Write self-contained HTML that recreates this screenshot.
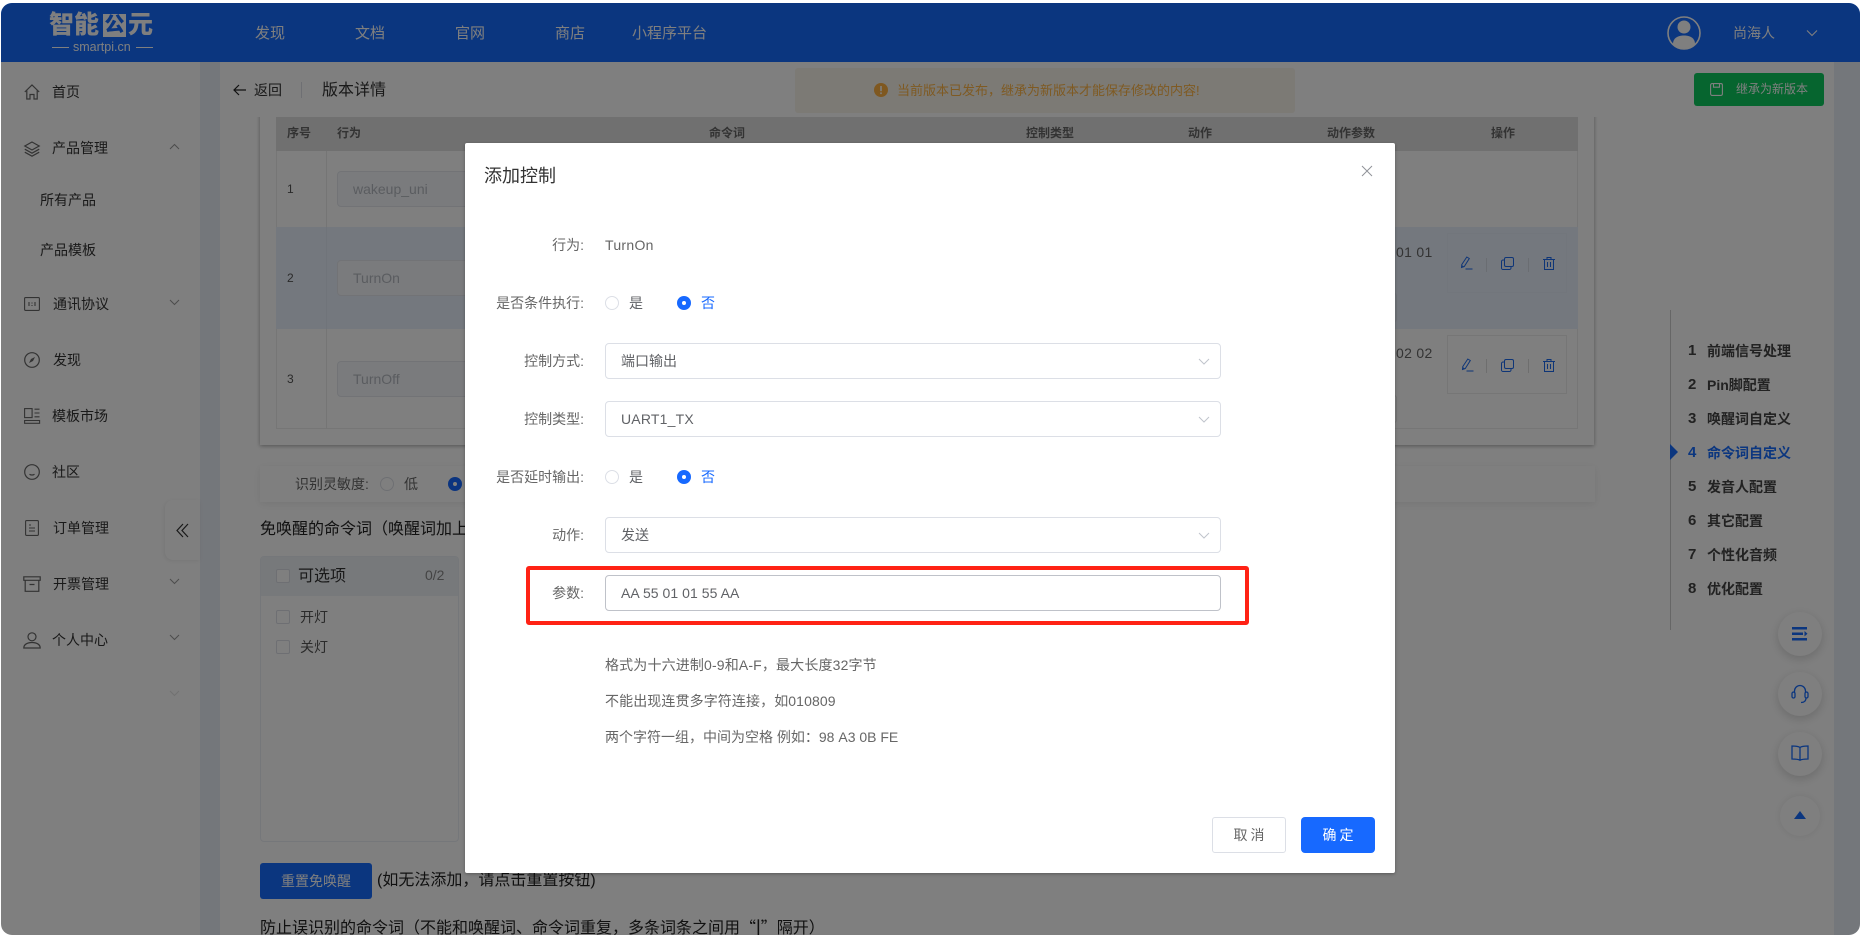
<!DOCTYPE html>
<html lang="zh-CN">
<head>
<meta charset="utf-8">
<title>版本详情</title>
<style>
*{box-sizing:border-box}
html,body{margin:0;padding:0;width:1860px;height:935px;overflow:hidden;background:#fff;font-family:"Liberation Sans","Noto Sans CJK SC",sans-serif}
#wrap{position:absolute;left:1px;top:3px;width:1859px;height:932px;border-radius:11px;overflow:hidden;background:#fff}
#page{position:absolute;left:-1px;top:-3px;width:1860px;height:935px;background:#fff}
.a{position:absolute}
.t{position:absolute;white-space:nowrap;line-height:20px;font-size:14px;color:#333}
svg{position:absolute;overflow:visible}
#ov{position:absolute;left:-1px;top:-3px;width:1860px;height:935px;background:rgba(0,0,0,.5)}
.head{font-size:12px;font-weight:700;color:#666}
.nav{font-size:15px;color:#fff}
.rnav{font-weight:700;color:#444;letter-spacing:0}
.rnav b{position:absolute;left:-19px;font-size:15px}
.rd{position:absolute;width:14px;height:14px;border-radius:50%;border:1px solid #dcdfe6;background:#fff}
.rc{position:absolute;width:14px;height:14px;border-radius:50%;background:#1769ff}
.rc:after{content:"";position:absolute;left:5px;top:5px;width:4px;height:4px;border-radius:50%;background:#fff}
.cb{position:absolute;width:14px;height:14px;border:1px solid #dcdfe6;border-radius:2px;background:#fff}
.inp{position:absolute;left:605px;width:616px;height:36px;border:1px solid #dcdfe6;border-radius:4px;background:#fff}
.lb{position:absolute;right:1276px;white-space:nowrap;line-height:20px;font-size:14px;color:#666}
.val{position:absolute;white-space:nowrap;line-height:20px;font-size:14px;color:#606266}
.circle{position:absolute;left:1778px;width:44px;height:44px;border-radius:50%;background:#fff;box-shadow:0 3px 10px rgba(0,0,0,.16)}
.lg{position:absolute;top:12px;width:25px;height:26px;font-size:25px;line-height:26px;font-weight:900;color:#fff;text-align:center}
.cq{font-family:"Noto Sans CJK SC",sans-serif}
</style>
</head>
<body>
<div id="wrap">
<div id="page">

  <!-- gutters -->
  <div class="a" style="left:200px;top:62px;width:20px;height:873px;background:#e9eef6"></div>
  <div class="a" style="left:1834px;top:62px;width:26px;height:873px;background:#e9eef6"></div>

  <!-- header -->
  <div class="a" style="left:0;top:0;width:1860px;height:62px;background:#166cff"></div>
  <div class="lg" style="left:49px">智</div>
  <div class="lg" style="left:74px">能</div>
  <div class="lg" style="left:103px;top:14px;width:23px;height:23px;line-height:22px;font-size:20px;background:#fff;color:#166cff">公</div>
  <div class="lg" style="left:128px">元</div>
  <div class="t" style="left:73px;top:37px;font-size:12.500px;color:#fff">smartpi.cn</div>
  <div class="a" style="left:52px;top:47px;width:17px;height:1px;background:#fff"></div>
  <div class="a" style="left:136px;top:47px;width:17px;height:1px;background:#fff"></div>
  <div class="t nav" style="left:255px;top:24px">发现</div>
  <div class="t nav" style="left:355px;top:24px">文档</div>
  <div class="t nav" style="left:455px;top:24px">官网</div>
  <div class="t nav" style="left:555px;top:24px">商店</div>
  <div class="t nav" style="left:632px;top:24px">小程序平台</div>
  <svg style="left:1667px;top:15px" width="34" height="36" viewBox="0 0 34 36"><circle cx="17" cy="18" r="16" fill="none" stroke="#fff" stroke-width="1.600"/><circle cx="17" cy="12" r="6.500" fill="#fff"/><path d="M6 29c0-6 5-8.500 11-8.500s11 2.500 11 8.500c-3 3-7 4.500-11 4.500s-8-1.500-11-4.500z" fill="#fff"/></svg>
  <div class="t" style="left:1733px;top:23px;color:#fff">尚海人</div>
  <svg style="left:1806px;top:29px" width="12" height="8" viewBox="0 0 12 8"><path d="M1 1.500l5 5 5-5" fill="none" stroke="#fff" stroke-width="1.100"/></svg>

  <!-- sidebar -->
  <svg style="left:24px;top:84px" width="16" height="16" viewBox="0 0 16 16" fill="none" stroke="#666" stroke-width="1.200"><path d="M.8 8L8 1l7.200 7M2.800 6.500V15H6v-4.500h4V15h3.200V6.500"/></svg>
  <div class="t" style="left:52px;top:82px">首页</div>
  <svg style="left:24px;top:141px" width="16" height="16" viewBox="0 0 16 16" fill="none" stroke="#666" stroke-width="1.200"><path d="M8 1L.8 5 8 9l7.200-4zM.8 8.200L8 12.200l7.200-4M.8 11.200L8 15.200l7.200-4"/></svg>
  <div class="t" style="left:52px;top:138px">产品管理</div>
  <svg style="left:169px;top:143px" width="11" height="7" viewBox="0 0 11 7"><path d="M1 6l4.500-4.500L10 6" fill="none" stroke="#999" stroke-width="1"/></svg>
  <div class="t" style="left:40px;top:190px">所有产品</div>
  <div class="t" style="left:40px;top:240px">产品模板</div>
  <svg style="left:24px;top:297px" width="16" height="14" viewBox="0 0 16 14" fill="none" stroke="#666" stroke-width="1.100"><rect x=".6" y=".6" width="14.800" height="12.800" rx="1"/><path d="M5 5v4M11 5v4M8 5.500v1M8 8v1"/></svg>
  <div class="t" style="left:53px;top:294px">通讯协议</div>
  <svg style="left:169px;top:299px" width="11" height="7" viewBox="0 0 11 7"><path d="M1 1l4.500 4.500L10 1" fill="none" stroke="#999" stroke-width="1"/></svg>
  <svg style="left:24px;top:352px" width="16" height="16" viewBox="0 0 16 16"><circle cx="8" cy="8" r="7.300" fill="none" stroke="#666" stroke-width="1.200"/><path d="M11 5L9 9 5 11l2-4z" fill="#666"/></svg>
  <div class="t" style="left:53px;top:350px">发现</div>
  <svg style="left:24px;top:408px" width="16" height="16" viewBox="0 0 16 16" fill="none" stroke="#666" stroke-width="1.100"><rect x=".6" y=".6" width="7.500" height="9"/><path d="M10.500 1.200H15.500M10.500 5h5M10.500 8.800h5"/><rect x=".6" y="12.500" width="15" height="2.800"/></svg>
  <div class="t" style="left:52px;top:406px">模板市场</div>
  <svg style="left:24px;top:464px" width="16" height="16" viewBox="0 0 16 16" fill="none" stroke="#666" stroke-width="1.200"><circle cx="8" cy="8" r="7.300"/><path d="M5.500 10.200c1.500 1 3.500 1 5 0"/></svg>
  <div class="t" style="left:52px;top:462px">社区</div>
  <svg style="left:25px;top:520px" width="14" height="16" viewBox="0 0 14 16" fill="none" stroke="#666" stroke-width="1.100"><rect x=".6" y=".6" width="12.800" height="14.800" rx="1"/><path d="M4 5h2M4 8h6M4 11h6"/></svg>
  <div class="t" style="left:53px;top:518px">订单管理</div>
  <svg style="left:169px;top:523px" width="11" height="7" viewBox="0 0 11 7"><path d="M1 1l4.500 4.500L10 1" fill="none" stroke="#999" stroke-width="1"/></svg>
  <svg style="left:23px;top:576px" width="18" height="16" viewBox="0 0 18 16" fill="none" stroke="#666" stroke-width="1.200"><path d="M.8.800h16.400v3.500H.8zM2.200 4.300v11h13.600v-11M6.500 8.500h5"/></svg>
  <div class="t" style="left:53px;top:574px">开票管理</div>
  <svg style="left:169px;top:578px" width="11" height="7" viewBox="0 0 11 7"><path d="M1 1l4.500 4.500L10 1" fill="none" stroke="#999" stroke-width="1"/></svg>
  <svg style="left:23px;top:632px" width="18" height="17" viewBox="0 0 18 17" fill="none" stroke="#666" stroke-width="1.200"><circle cx="9" cy="4.800" r="4"/><path d="M.8 16c0-3.500 3.500-5.500 8.200-5.500s8.200 2 8.200 5.500z"/></svg>
  <div class="t" style="left:52px;top:630px">个人中心</div>
  <svg style="left:169px;top:634px" width="11" height="7" viewBox="0 0 11 7"><path d="M1 1l4.500 4.500L10 1" fill="none" stroke="#999" stroke-width="1"/></svg>
  <svg style="left:169px;top:690px" width="11" height="7" viewBox="0 0 11 7"><path d="M1 1l4.500 4.500L10 1" fill="none" stroke="#e2e2e2" stroke-width="1"/></svg>
  <div class="a" style="left:165px;top:500px;width:35px;height:60px;background:#fff;border-radius:8px 0 0 8px;box-shadow:-1px 1px 4px rgba(0,0,0,.08)"></div>
  <svg style="left:176px;top:523px" width="13" height="15" viewBox="0 0 13 15" fill="none" stroke="#333" stroke-width="1.200"><path d="M7 1L1 7.500 7 14M12 1L6 7.500 12 14"/></svg>

  <!-- content scroll: table card -->
  <div class="a" style="left:260px;top:100px;width:1334px;height:345px;background:#fff;box-shadow:0 1px 4px rgba(0,0,0,.35)"></div>
  <div class="a" style="left:276px;top:117px;width:1302px;height:34px;background:#e0e0e0"></div>
  <div class="a" style="left:276px;top:151px;width:1302px;height:278px;border:1px solid #ececec;border-top:0"></div>
  <div class="a" style="left:326px;top:151px;width:1px;height:278px;background:#eaeaea"></div>
  <div class="a" style="left:276px;top:227px;width:1302px;height:102px;background:#e8f0fc"></div>
  <div class="a" style="left:326px;top:227px;width:1px;height:102px;background:#e0e8f4"></div>
  <div class="t head" style="left:287px;top:123px">序号</div>
  <div class="t head" style="left:337px;top:123px">行为</div>
  <div class="t head" style="left:709px;top:123px">命令词</div>
  <div class="t head" style="left:1026px;top:123px">控制类型</div>
  <div class="t head" style="left:1188px;top:123px">动作</div>
  <div class="t head" style="left:1327px;top:123px">动作参数</div>
  <div class="t head" style="left:1491px;top:123px">操作</div>
  <div class="t" style="left:287px;top:179px;font-size:12px;color:#555">1</div>
  <div class="t" style="left:287px;top:268px;font-size:12px;color:#555">2</div>
  <div class="t" style="left:287px;top:369px;font-size:12px;color:#555">3</div>
  <div class="a" style="left:337px;top:171px;width:160px;height:36px;background:#f5f7fa;border:1px solid #e4e7ed;border-radius:4px"></div>
  <div class="a" style="left:337px;top:260px;width:160px;height:36px;background:#f5f7fa;border:1px solid #e4e7ed;border-radius:4px"></div>
  <div class="a" style="left:337px;top:361px;width:160px;height:36px;background:#f5f7fa;border:1px solid #e4e7ed;border-radius:4px"></div>
  <div class="t" style="left:353px;top:179px;color:#b5b9c0">wakeup_uni</div>
  <div class="t" style="left:353px;top:268px;color:#b5b9c0">TurnOn</div>
  <div class="t" style="left:353px;top:369px;color:#b5b9c0">TurnOff</div>
  <div class="t" style="left:1396px;top:242px;color:#666;letter-spacing:.3px">01 01</div>
  <div class="t" style="left:1396px;top:343px;color:#666;letter-spacing:.3px">02 02</div>
  <div class="a" style="left:1385px;top:293px;width:12px;height:29px;border:1px solid #dfe5ee;border-radius:3px"></div>
  <div class="a" style="left:1385px;top:395px;width:12px;height:28px;border:1px solid #e8e8e8;border-radius:3px"></div>
  <div class="a" style="left:1447px;top:233px;width:120px;height:60px;border:1px solid #e5edf9"></div>
  <div class="a" style="left:1447px;top:335px;width:120px;height:59px;border:1px solid #ececec"></div>

  <!-- row icons -->
  <svg style="left:1460px;top:256px" width="13" height="14" viewBox="0 0 13 14" fill="none" stroke="#1d6bee" stroke-width="1"><path d="M6.800 1l2.500 1.500-5 8-2.800 1 .3-3zM1.500 9.500l2.500 1.500M5.500 13h7"/></svg>
  <div class="a" style="left:1486px;top:258px;width:1px;height:14px;background:#d4dae4"></div>
  <svg style="left:1501px;top:257px" width="13" height="13" viewBox="0 0 13 13" fill="none" stroke="#1d6bee" stroke-width="1"><rect x="3.500" y=".5" width="9" height="9" rx="1.500"/><path d="M3.500 3H2a1.500 1.500 0 0 0-1.500 1.500V11A1.500 1.500 0 0 0 2 12.500h6.500A1.500 1.500 0 0 0 10 11V9.500"/></svg>
  <div class="a" style="left:1528px;top:258px;width:1px;height:14px;background:#d4dae4"></div>
  <svg style="left:1543px;top:257px" width="12" height="13" viewBox="0 0 12 13" fill="none" stroke="#1d6bee" stroke-width="1"><path d="M0 2.500h12M4 2.500V.5h4v2M1.500 2.500v10h9v-10M4.500 5v5M7.500 5v5"/></svg>
  <svg style="left:1461px;top:358px" width="13" height="14" viewBox="0 0 13 14" fill="none" stroke="#1d6bee" stroke-width="1"><path d="M6.800 1l2.500 1.500-5 8-2.800 1 .3-3zM1.500 9.500l2.500 1.500M5.500 13h7"/></svg>
  <div class="a" style="left:1486px;top:359px;width:1px;height:14px;background:#dcdcdc"></div>
  <svg style="left:1501px;top:359px" width="13" height="13" viewBox="0 0 13 13" fill="none" stroke="#1d6bee" stroke-width="1"><rect x="3.500" y=".5" width="9" height="9" rx="1.500"/><path d="M3.500 3H2a1.500 1.500 0 0 0-1.500 1.500V11A1.500 1.500 0 0 0 2 12.500h6.500A1.500 1.500 0 0 0 10 11V9.500"/></svg>
  <div class="a" style="left:1528px;top:359px;width:1px;height:14px;background:#dcdcdc"></div>
  <svg style="left:1543px;top:359px" width="12" height="13" viewBox="0 0 12 13" fill="none" stroke="#1d6bee" stroke-width="1"><path d="M0 2.500h12M4 2.500V.5h4v2M1.500 2.500v10h9v-10M4.500 5v5M7.500 5v5"/></svg>

  <!-- sensitivity -->
  <div class="a" style="left:260px;top:466px;width:1335px;height:36px;background:#fff;box-shadow:0 2px 8px rgba(0,0,0,.08)"></div>
  <div class="t" style="left:295px;top:474px;color:#666">识别灵敏度:</div>
  <div class="rd" style="left:380px;top:477px"></div>
  <div class="t" style="left:404px;top:474px;color:#666">低</div>
  <div class="rc" style="left:448px;top:477px"></div>

  <div class="t" style="left:260px;top:520px;font-size:16px;color:#222">免唤醒的命令词（唤醒词加上命令词）</div>

  <!-- transfer -->
  <div class="a" style="left:260px;top:556px;width:199px;height:286px;border:1px solid #ebeef5;border-radius:4px;background:#fff"></div>
  <div class="a" style="left:261px;top:557px;width:197px;height:39px;background:#eef2f7;border-radius:3px 3px 0 0"></div>
  <div class="cb" style="left:276px;top:569px"></div>
  <div class="t" style="left:298px;top:567px;font-size:16px;color:#333">可选项</div>
  <div class="t" style="left:425px;top:565px;font-size:14px;color:#888">0/2</div>
  <div class="cb" style="left:276px;top:610px"></div>
  <div class="t" style="left:300px;top:607px;color:#555">开灯</div>
  <div class="cb" style="left:276px;top:640px"></div>
  <div class="t" style="left:300px;top:637px;color:#555">关灯</div>

  <div class="a" style="left:260px;top:863px;width:112px;height:36px;background:#166cff;border-radius:3px"></div>
  <div class="t" style="left:281px;top:871px;color:#fff">重置免唤醒</div>
  <div class="t" style="left:377px;top:871px;font-size:16px;color:#222">(如无法添加，请点击重置按钮)</div>
  <div class="t" style="left:260px;top:916px;font-size:16px;color:#222">防止误识别的命令词（不能和唤醒词、命令词重复，多条词条之间用<span class="cq">“<b>|</b>”</span>隔开）</div>

  <!-- top bar -->
  <div class="a" style="left:220px;top:62px;width:1614px;height:55px;background:#fff"></div>
  <svg style="left:233px;top:84px" width="13" height="12" viewBox="0 0 13 12" fill="none" stroke="#222" stroke-width="1.200"><path d="M6 1L1 6l5 5M1 6h12"/></svg>
  <div class="t" style="left:254px;top:80px;color:#333">返回</div>
  <div class="a" style="left:301px;top:82px;width:1px;height:16px;background:#dcdfe6"></div>
  <div class="t" style="left:322px;top:80.500px;font-size:16px;color:#333">版本详情</div>

  <!-- warning -->
  <div class="a" style="left:795px;top:68px;width:500px;height:45px;background:#f8f4ea;border-radius:3px"></div>
  <svg style="left:874px;top:83px" width="14" height="14" viewBox="0 0 14 14"><circle cx="7" cy="7" r="7" fill="#feb040"/><rect x="6.200" y="3" width="1.600" height="5.200" fill="#fff"/><rect x="6.200" y="9.400" width="1.600" height="1.700" fill="#fff"/></svg>
  <div class="t" style="left:897px;top:81px;color:#feb444;font-size:13px">当前版本已发布，继承为新版本才能保存修改的内容!</div>

  <div class="a" style="left:1694px;top:73px;width:130px;height:33px;background:#0ccb5f;border-radius:3px"></div>
  <svg style="left:1710px;top:83px" width="13" height="13" viewBox="0 0 13 13" fill="none" stroke="#fff" stroke-width="1.100"><rect x=".6" y=".6" width="11.800" height="11.800" rx="1.500"/><path d="M3.500.8v3.400h6V.8"/></svg>
  <div class="t" style="left:1736px;top:79px;font-size:12px;color:#fff">继承为新版本</div>

  <!-- right nav -->
  <div class="a" style="left:1670px;top:310px;width:1px;height:320px;background:#ccc"></div>
  <svg style="left:1670px;top:444px" width="9" height="16" viewBox="0 0 9 16"><path d="M0 0l8 8-8 8z" fill="#166cff"/></svg>
  <div class="t rnav" style="left:1707px;top:341px"><b>1</b>前端信号处理</div>
  <div class="t rnav" style="left:1707px;top:375px"><b>2</b>Pin脚配置</div>
  <div class="t rnav" style="left:1707px;top:409px"><b>3</b>唤醒词自定义</div>
  <div class="t rnav" style="left:1707px;top:443px;color:#166cff"><b>4</b>命令词自定义</div>
  <div class="t rnav" style="left:1707px;top:477px"><b>5</b>发音人配置</div>
  <div class="t rnav" style="left:1707px;top:511px"><b>6</b>其它配置</div>
  <div class="t rnav" style="left:1707px;top:545px"><b>7</b>个性化音频</div>
  <div class="t rnav" style="left:1707px;top:579px"><b>8</b>优化配置</div>

  <!-- floating buttons -->
  <div class="circle" style="top:612px"></div>
  <svg style="left:1792px;top:627px" width="16" height="14" viewBox="0 0 16 14" fill="#166cff"><rect x="0" y="0" width="15" height="2.500"/><rect x="0" y="5.500" width="11" height="2.500"/><path d="M12.500 4l3 2.700-3 2.700z"/><rect x="0" y="11" width="15" height="2.500"/></svg>
  <div class="circle" style="top:672px"></div>
  <svg style="left:1791px;top:684px" width="18" height="20" viewBox="0 0 18 20" fill="none" stroke="#166cff" stroke-width="1.300"><path d="M3.500 9V7a5.500 5.500 0 0 1 11 0v2"/><rect x="1" y="8" width="3" height="6" rx="1.500"/><rect x="14" y="8" width="3" height="6" rx="1.500"/><path d="M15 14c0 3-2 4.500-5 4.500"/></svg>
  <div class="circle" style="top:732px"></div>
  <svg style="left:1791px;top:745px" width="18" height="16" viewBox="0 0 18 16" fill="none" stroke="#166cff" stroke-width="1.300"><path d="M9 2.500C7 1 4 1 1 1v13c3 0 6 0 8 1.200 2-1.200 5-1.200 8-1.200V1c-3 0-6 0-8 1.500zM9 2.500v12.700"/></svg>
  <div class="circle" style="top:796px;left:1780px;width:40px;height:40px;box-shadow:0 0 8px rgba(0,0,0,.09)"></div>
  <svg style="left:1794px;top:811px" width="12" height="8" viewBox="0 0 12 8"><path d="M6 0l6 8H0z" fill="#166cff"/></svg>

</div>

<!-- overlay -->
<div id="ov"></div>
</div>

<!-- modal -->
<div class="a" style="left:465px;top:143px;width:930px;height:730px;background:#fff;border-radius:2px;box-shadow:0 1px 3px rgba(0,0,0,.3)"></div>
<div class="t" style="left:484px;top:166px;font-size:18px;color:#333">添加控制</div>
<svg style="left:1361px;top:165px" width="12" height="12" viewBox="0 0 12 12" fill="none" stroke="#909399" stroke-width="1"><path d="M1 1l10 10M11 1L1 11"/></svg>

<div class="lb" style="top:235px">行为:</div>
<div class="val" style="left:605px;top:235px;color:#666;letter-spacing:.3px">TurnOn</div>

<div class="lb" style="top:293px">是否条件执行:</div>
<div class="rd" style="left:605px;top:296px"></div>
<div class="val" style="left:629px;top:293px">是</div>
<div class="rc" style="left:677px;top:296px"></div>
<div class="val" style="left:701px;top:293px;color:#1769ff">否</div>

<div class="lb" style="top:351px">控制方式:</div>
<div class="inp" style="top:343px"></div>
<div class="val" style="left:621px;top:351px">端口输出</div>
<svg style="left:1198px;top:358px" width="12" height="7" viewBox="0 0 12 7"><path d="M1 1l5 5 5-5" fill="none" stroke="#c0c4cc" stroke-width="1"/></svg>

<div class="lb" style="top:409px">控制类型:</div>
<div class="inp" style="top:401px"></div>
<div class="val" style="left:621px;top:409px;letter-spacing:.2px">UART1_TX</div>
<svg style="left:1198px;top:416px" width="12" height="7" viewBox="0 0 12 7"><path d="M1 1l5 5 5-5" fill="none" stroke="#c0c4cc" stroke-width="1"/></svg>

<div class="lb" style="top:467px">是否延时输出:</div>
<div class="rd" style="left:605px;top:470px"></div>
<div class="val" style="left:629px;top:467px">是</div>
<div class="rc" style="left:677px;top:470px"></div>
<div class="val" style="left:701px;top:467px;color:#1769ff">否</div>

<div class="lb" style="top:525px">动作:</div>
<div class="inp" style="top:517px"></div>
<div class="val" style="left:621px;top:525px">发送</div>
<svg style="left:1198px;top:532px" width="12" height="7" viewBox="0 0 12 7"><path d="M1 1l5 5 5-5" fill="none" stroke="#c0c4cc" stroke-width="1"/></svg>

<div class="lb" style="top:583px">参数:</div>
<div class="inp" style="top:575px;border-color:#bfc2c9"></div>
<div class="val" style="left:621px;top:583px;letter-spacing:.05px">AA 55 01 01 55 AA</div>

<div class="a" style="left:526px;top:566px;width:723px;height:59px;border:4px solid #ff2215;border-radius:3px"></div>

<div class="val" style="left:605px;top:655px;color:#666;letter-spacing:.15px">格式为十六进制0-9和A-F，最大长度32字节</div>
<div class="val" style="left:605px;top:691px;color:#666;letter-spacing:.1px">不能出现连贯多字符连接，如010809</div>
<div class="val" style="left:605px;top:727px;color:#666">两个字符一组，中间为空格 例如：98 A3 0B FE</div>

<div class="a" style="left:1212px;top:817px;width:74px;height:36px;border:1px solid #dcdfe6;border-radius:3px;background:#fff;text-align:center;line-height:34px;font-size:14px;color:#666;letter-spacing:3px;text-indent:3px">取消</div>
<div class="a" style="left:1301px;top:817px;width:74px;height:36px;border-radius:4px;background:#1769ff;text-align:center;line-height:36px;font-size:14px;color:#fff;letter-spacing:3px;text-indent:3px">确定</div>

</body>
</html>
